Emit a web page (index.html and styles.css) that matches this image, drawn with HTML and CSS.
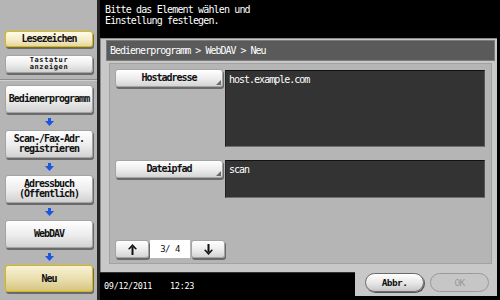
FILE: index.html
```html
<!DOCTYPE html>
<html>
<head>
<meta charset="utf-8">
<link rel="stylesheet" href="styles.css">
</head>
<body>
<div class="screen">
  <aside class="side">
    <div class="side-top">
      <div class="sbtn bookmark">Lesezeichen</div>
      <div class="sbtn kbd">Tastatur<br>anzeigen</div>
    </div>
    <nav class="side-nav">
      <div class="sbtn">Bedienerprogramm</div>
      <div class="arrow"><svg width="9" height="8" viewBox="0 0 9 8"><rect x="3" y="0" width="3" height="4" fill="#1a56e0"/><polygon points="0,3 9,3 4.5,8" fill="#1a56e0"/></svg></div>
      <div class="sbtn">Scan-/Fax-Adr.<br>registrieren</div>
      <div class="arrow"><svg width="9" height="8" viewBox="0 0 9 8"><rect x="3" y="0" width="3" height="4" fill="#1a56e0"/><polygon points="0,3 9,3 4.5,8" fill="#1a56e0"/></svg></div>
      <div class="sbtn">Adressbuch<br>(Öffentlich)</div>
      <div class="arrow"><svg width="9" height="8" viewBox="0 0 9 8"><rect x="3" y="0" width="3" height="4" fill="#1a56e0"/><polygon points="0,3 9,3 4.5,8" fill="#1a56e0"/></svg></div>
      <div class="sbtn">WebDAV</div>
      <div class="arrow"><svg width="9" height="8" viewBox="0 0 9 8"><rect x="3" y="0" width="3" height="4" fill="#1a56e0"/><polygon points="0,3 9,3 4.5,8" fill="#1a56e0"/></svg></div>
      <div class="sbtn current">Neu</div>
    </nav>
  </aside>
  <main class="main">
    <div class="msg">Bitte das Element wählen und<br>Einstellung festlegen.</div>
    <div class="frame">
      <div class="crumb">Bedienerprogramm &gt; WebDAV &gt; Neu</div>
      <div class="content">
        <div class="field">
          <div class="fbtn">Hostadresse</div>
          <div class="fval tall">host.example.com</div>
        </div>
        <div class="field second">
          <div class="fbtn">Dateipfad</div>
          <div class="fval short">scan</div>
        </div>
        <div class="pager">
          <div class="pbtn"><svg width="9" height="11" viewBox="0 0 9 11"><rect x="3.5" y="3" width="2" height="8" fill="#111"/><polygon points="0,5 4.5,0 9,5 7.5,5.5 4.5,2.5 1.5,5.5" fill="#111"/></svg></div>
          <div class="count">3/ 4</div>
          <div class="pbtn"><svg width="9" height="11" viewBox="0 0 9 11"><rect x="3.5" y="0" width="2" height="8" fill="#111"/><polygon points="0,6 4.5,11 9,6 7.5,5.5 4.5,8.5 1.5,5.5" fill="#111"/></svg></div>
        </div>
      </div>
    </div>
    <div class="footer">
      <div class="clock"><span class="date">09/12/2011</span><span>12:23</span></div>
      <div class="actions">
        <div class="abtn">Abbr.</div>
        <div class="abtn off">OK</div>
      </div>
    </div>
  </main>
</div>
</body>
</html>
```
FILE: styles.css
```css
* { box-sizing: border-box; }
html, body { margin: 0; padding: 0; background: #000; }
body { font-family: "DejaVu Sans Mono", "Liberation Mono", monospace; }

.screen {
  display: flex;
  width: 500px;
  height: 300px;
  background: #000;
  overflow: hidden;
}

/* sidebar */
.side {
  width: 100px;
  height: 300px;
  background: #b5b5b5;
  border-right: 3px solid #262626;
}
.side-top {
  height: 80px;
  padding: 31px 4px 0 5px;
  border-bottom: 1px solid #8c8c8c;
  box-shadow: 0 1px 0 #cfcfcf;
}
.side-nav {
  padding: 5px 4px 0 5px;
}
.sbtn {
  display: flex;
  align-items: center;
  justify-content: center;
  text-align: center;
  height: 28px;
  background: linear-gradient(#ffffff, #ececec 55%, #d2d2d2);
  border: 1px solid #a4a4a4;
  border-radius: 3px;
  box-shadow: 1px 2px 0 #6a6a6a;
  color: #111;
  font-size: 10px;
  line-height: 10px;
  letter-spacing: -1px;
  font-weight: bold;
}
.sbtn.bookmark {
  height: 16px;
  background: linear-gradient(#fffbe8, #f3ebc4 60%, #e6d89c);
  border: 1px solid #dcbc00;
  margin-bottom: 8px;
}
.sbtn.kbd {
  height: 18px;
  font-size: 7px;
  line-height: 7px;
  letter-spacing: 0.6px;
}
.sbtn.current {
  height: 27px;
  background: linear-gradient(#f8f2d6, #eadfae 50%, #d6c482);
  border: 1px solid #d9b900;
}
.arrow {
  height: 17px;
  display: flex;
  align-items: center;
  justify-content: center;
  padding-top: 1px;
}
.arrow svg { display: block; }

/* main */
.main {
  width: 400px;
  display: flex;
  flex-direction: column;
}
.msg {
  height: 38px;
  padding: 4px 0 0 5px;
  color: #fff;
  font-size: 10px;
  line-height: 11px;
  letter-spacing: -0.85px;
}
.frame {
  height: 234px;
  margin-right: 3px;
  background: #c8c8c8;
  border-left: 1px solid #8a8a8a;
  border-top: 1px solid #8a8a8a;
  padding: 1px 2px 8px 5px;
  display: flex;
  flex-direction: column;
}
.crumb {
  height: 21px;
  background: #5a5a5a;
  border: 1px solid #7c7c7c;
  color: #fff;
  padding-left: 3px;
  font-size: 10px;
  line-height: 19px;
  letter-spacing: -1px;
}
.content {
  flex: 1;
  margin: 2px 3px 0 3px;
  background: #b5b5b5;
  border: 1px solid #a2a2a2;
  padding: 5px 4px 5px 5px;
  display: flex;
  flex-direction: column;
}
.field {
  display: flex;
  gap: 2px;
  align-items: flex-start;
}
.field.second { margin-top: 13px; }
.fbtn {
  position: relative;
  width: 108px;
  height: 18px;
  background: linear-gradient(#ffffff, #ececec 55%, #d4d4d4);
  border: 1px solid #a4a4a4;
  border-radius: 3px;
  box-shadow: 1px 2px 0 #6a6a6a;
  color: #111;
  font-weight: bold;
  font-size: 10px;
  line-height: 16px;
  letter-spacing: -1px;
  text-align: center;
}
.fbtn::after {
  content: "";
  position: absolute;
  right: 1px;
  bottom: 1px;
  width: 0;
  height: 0;
  border-left: 5px solid transparent;
  border-bottom: 5px solid #6a6a6a;
}
.fval {
  width: 260px;
  margin-top: 1px;
  background: #333;
  border-top: 1px solid #111;
  border-left: 1px solid #222;
  border-bottom: 1px solid #707070;
  border-right: 1px solid #555;
  color: #fff;
  padding: 3px 3px;
  font-size: 10px;
  line-height: 12px;
  letter-spacing: -1px;
}
.fval.tall { height: 77px; }
.fval.short { height: 38px; margin-top: 0; }

.pager {
  margin-top: auto;
  display: flex;
  align-items: stretch;
  height: 18px;
}
.pbtn {
  width: 34px;
  display: flex;
  align-items: center;
  justify-content: center;
  background: linear-gradient(#ffffff, #ececec 55%, #d4d4d4);
  border: 1px solid #a4a4a4;
  border-radius: 3px;
  box-shadow: 1px 2px 0 #6a6a6a;
}
.pbtn svg { display: block; }
.count {
  width: 40px;
  margin: 0 1px;
  background: #fff;
  color: #111;
  font-size: 9px;
  line-height: 18px;
  text-align: center;
  letter-spacing: -0.5px;
}

/* footer */
.footer {
  height: 28px;
  display: flex;
}
.clock {
  width: 255px;
  background: #000;
  border-top: 1px solid #333;
  color: #fff;
  font-size: 8.5px;
  letter-spacing: -0.3px;
  padding: 8px 0 0 4px;
  display: flex;
}
.clock .date { width: 66px; }
.actions {
  width: 142px;
  height: 24px;
  background: #c8c8c8;
  display: flex;
  gap: 6px;
  padding: 1px 0 0 10px;
}
.abtn {
  width: 59px;
  height: 19px;
  border-radius: 10px;
  background: linear-gradient(#ffffff, #e6e6e6 55%, #c6c6c6);
  border: 1px solid #6a6a6a;
  box-shadow: 1px 1px 0 #555;
  color: #111;
  font-weight: bold;
  font-size: 9.5px;
  line-height: 17px;
  letter-spacing: -0.6px;
  text-align: center;
}
.abtn.off {
  background: #c6c6c6;
  border: 1px solid #9a9a9a;
  box-shadow: none;
  color: #9a9a9a;
  font-weight: normal;
}
```
